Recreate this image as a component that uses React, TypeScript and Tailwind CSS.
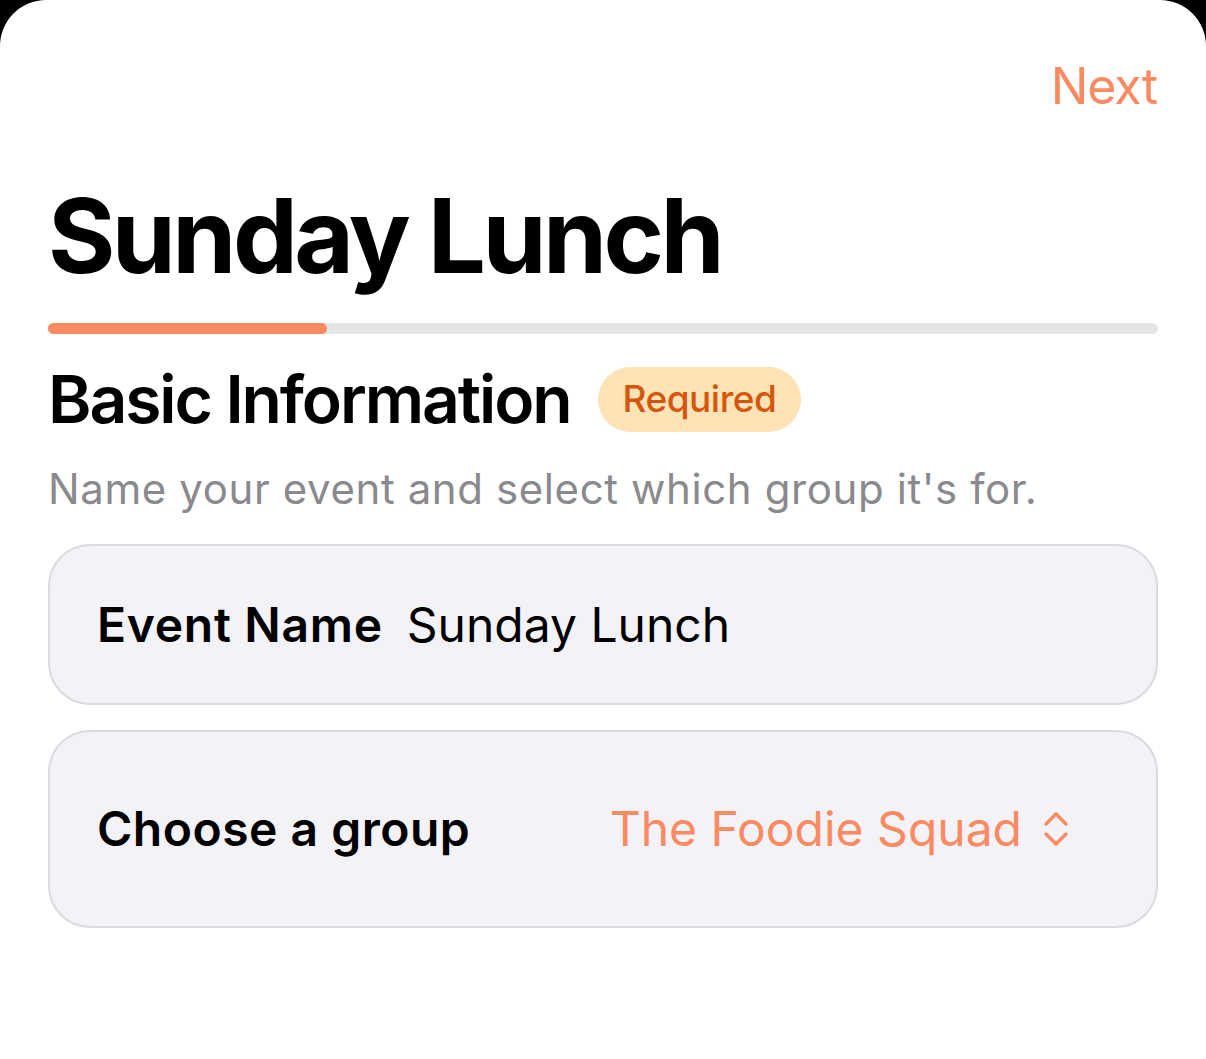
import React from "react";

export default function App() {
  return (
    <div className="w-[1206px] h-[1059px] bg-black overflow-hidden" style={{ fontFamily: "Inter, 'Noto Sans', sans-serif" }}>
      <div className="h-full bg-white rounded-t-[46px] px-[48px] flex flex-col">
        <div className="flex justify-end pt-[61px]">
          <button className="text-[50px] leading-none text-[#F98A61] tracking-[-1px] pr-[1px]">Next</button>
        </div>
        <h1 className="mt-[73px] text-[103px] leading-none font-bold text-black tracking-[-3.6px]">Sunday Lunch</h1>
        <div className="mt-[36px] h-[11px] w-full rounded-full bg-[#E5E5E7] flex">
          <div className="h-full w-[279px] rounded-full bg-[#FA8A5F]" />
        </div>
        <div className="mt-[32px] flex items-center gap-[27px]">
          <h2 className="text-[66px] leading-none font-semibold text-black tracking-[-2.1px]">Basic Information</h2>
          <span className="h-[65px] px-[25px] flex items-center rounded-full bg-[#FDE3B6] text-[37px] font-medium text-[#D4570F] tracking-[-0.5px]">Required</span>
        </div>
        <p className="mt-[36px] text-[42px] leading-none text-[#8A8A8E] tracking-[0.6px]">Name your event and select which group it's for.</p>
        <div className="mt-[34px] h-[161px] rounded-[42px] bg-[#F2F2F7] border-2 border-[#DADADF] flex items-center pl-[47px] gap-[24px]">
          <span className="text-[48px] font-semibold text-black tracking-[0.7px]">Event Name</span>
          <span className="text-[48px] text-black">Sunday Lunch</span>
        </div>
        <div className="mt-[25px] h-[198px] rounded-[42px] bg-[#F2F2F7] border-2 border-[#DADADF] flex items-center pl-[47px] pr-[86px] justify-between">
          <span className="text-[48px] font-semibold text-black tracking-[0.5px]">Choose a group</span>
          <span className="flex items-center gap-[20px]">
            <span className="text-[48px] text-[#F98A61]">The Foodie Squad</span>
            <svg width="28" height="38" viewBox="0 0 28 38" fill="none" stroke="#F98A61" strokeWidth="3.5" strokeLinecap="round" strokeLinejoin="round">
              <path d="M4 14 L14 4 L24 14" />
              <path d="M4 24 L14 34 L24 24" />
            </svg>
          </span>
        </div>
      </div>
    </div>
  );
}
